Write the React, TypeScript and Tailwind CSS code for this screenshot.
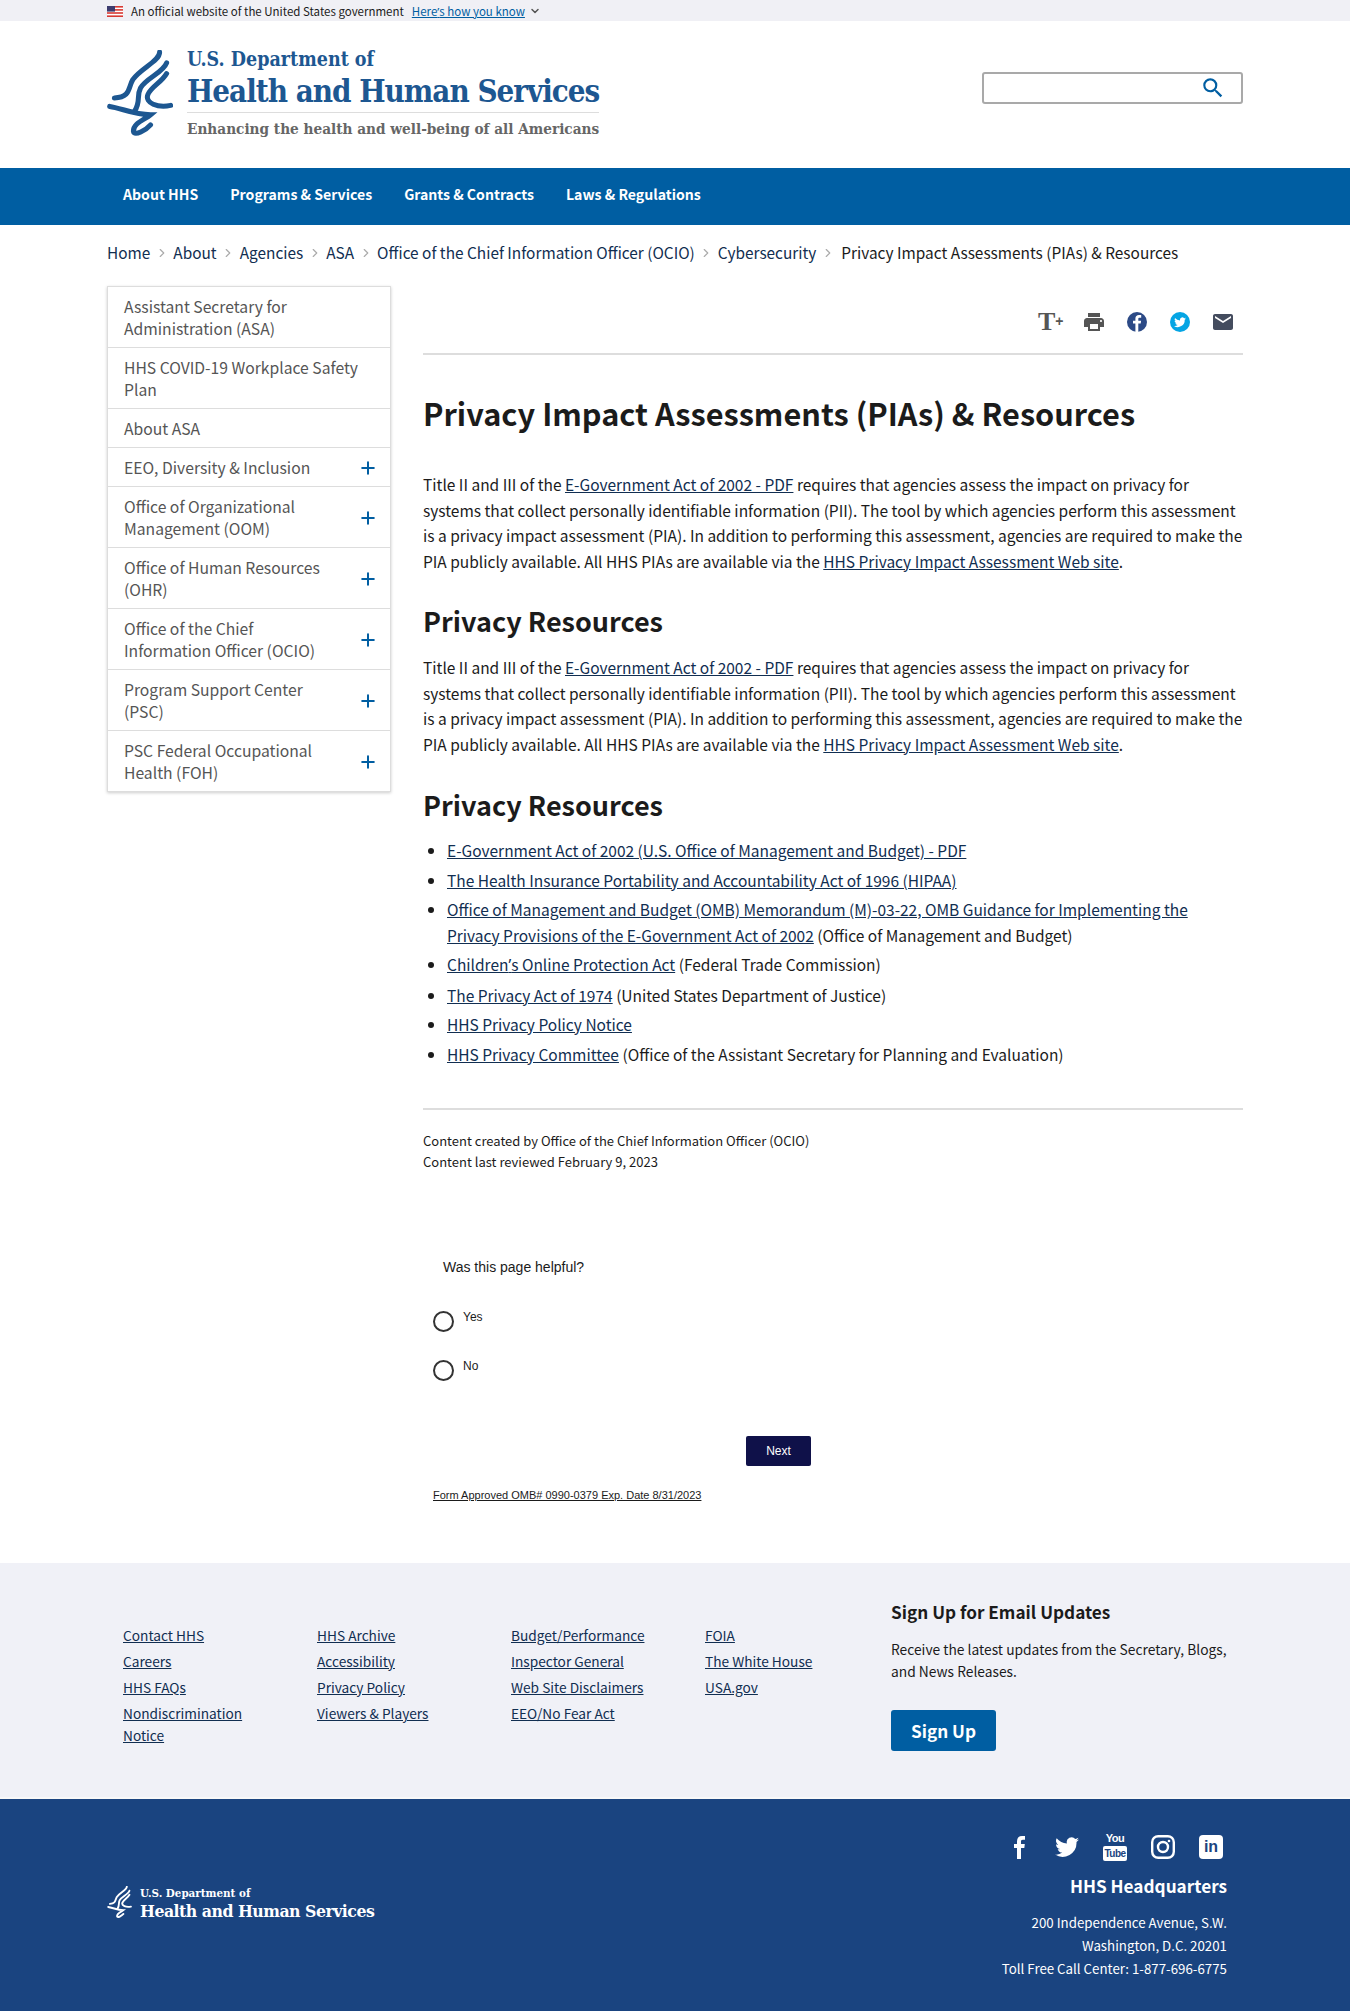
import { ChevronDown, ChevronRight, Plus } from 'lucide-react';
import type { ReactNode } from 'react';

const sans = "font-['Noto_Sans_CJK_SC','Source_Sans_Pro','Open_Sans',sans-serif]";
const serif = "font-['DejaVu_Serif_Condensed','DejaVu_Serif','Liberation_Serif',serif]";
const arial = "font-['Liberation_Sans',Arial,sans-serif]";

const crumbs = ['Home', 'About', 'Agencies', 'ASA', 'Office of the Chief Information Officer (OCIO)', 'Cybersecurity'];

const sideNav = [
  { label: 'Assistant Secretary for Administration (ASA)', plus: false },
  { label: 'HHS COVID-19 Workplace Safety Plan', plus: false },
  { label: 'About ASA', plus: false },
  { label: 'EEO, Diversity & Inclusion', plus: true },
  { label: 'Office of Organizational Management (OOM)', plus: true },
  { label: 'Office of Human Resources (OHR)', plus: true },
  { label: 'Office of the Chief Information Officer (OCIO)', plus: true },
  { label: 'Program Support Center (PSC)', plus: true },
  { label: 'PSC Federal Occupational Health (FOH)', plus: true },
];

const footerCols = [
  ['Contact HHS', 'Careers', 'HHS FAQs', 'Nondiscrimination Notice'],
  ['HHS Archive', 'Accessibility', 'Privacy Policy', 'Viewers & Players'],
  ['Budget/Performance', 'Inspector General', 'Web Site Disclaimers', 'EEO/No Fear Act'],
  ['FOIA', 'The White House', 'USA.gov'],
];

function A({ children }: { children: ReactNode }) {
  return <a className="text-[#112e51] underline">{children}</a>;
}

// curly quotes come out full width in the CJK face
function Apos() {
  return <span className="font-['Noto_Sans',sans-serif]">’</span>;
}

function Eagle({ className, color }: { className?: string; color: string }) {
  return (
    <svg className={className} viewBox="48 152 197 256" fill="none" stroke={color} strokeLinecap="round" strokeWidth="15">
      <path d="M205 158 C205 185 150 205 125 240 C110 265 120 292 70 295" />
      <path d="M226 190 C215 220 165 235 148 265 C135 290 150 305 130 335" />
      <path d="M226 222 C210 250 180 260 170 285 C160 310 200 325 238 317" />
      <path d="M56 320 C90 325 130 345 178 345 C160 360 125 370 127 395 C130 410 165 390 178 375" />
    </svg>
  );
}

function Flag() {
  return (
    <svg width="16" height="11" viewBox="0 0 16 11">
      <rect width="16" height="11" fill="#fff" />
      <rect width="16" height="1.6" fill="#d83933" />
      <rect y="3.1" width="16" height="1.6" fill="#d83933" />
      <rect y="6.2" width="16" height="1.6" fill="#d83933" />
      <rect y="9.4" width="16" height="1.6" fill="#d83933" />
      <rect width="8" height="5.6" fill="#3c3b6e" />
    </svg>
  );
}

function Intro() {
  return (
    <p>
      Title II and III of the <A>E-Government Act of 2002 - PDF</A> requires that agencies assess the impact on privacy for systems that collect personally identifiable information (PII). The tool by which agencies perform this assessment is a privacy impact assessment (PIA). In addition to performing this assessment, agencies are required to make the PIA publicly available. All HHS PIAs are available via the <A>HHS Privacy Impact Assessment Web site</A>.
    </p>
  );
}

export default function App() {
  return (
    <div className={`${sans} bg-white text-[15.5px] leading-[25.5px] text-[#1b1b1b]`}>
      <div className="h-[21px] bg-[#f0f0f5]">
        <div className="mx-[107px] flex h-full items-center pt-[1px] text-[11.5px] leading-[20px]">
          <Flag />
          <span className="ml-2">An official website of the United States government</span>
          <a className="ml-2 text-[#005ea2] underline">Here<Apos />s how you know</a>
          <ChevronDown className="ml-1 h-3 w-3 text-[#555]" strokeWidth={3} />
        </div>
      </div>

      <header className="flex h-[147px] items-start justify-between px-[107px]">
        <div className="mt-[29px] flex">
          <Eagle className="h-[86px] w-[66px]" color="#1d5791" />
          <div className="ml-[14px] mt-[-2px] w-[412px]">
            <div className={`${serif} text-[19.5px] font-bold leading-[24px] text-[#1d5791]`}>U.S. Department of</div>
            <div className={`${serif} whitespace-nowrap text-[31px] font-bold leading-[38px] tracking-[-1px] text-[#1d5791]`}>
              Health and Human Services
            </div>
            <div className="mt-[2px] h-px bg-[#ddd]" />
            <div className={`${serif} mt-[4px] whitespace-nowrap text-[15.2px] font-bold leading-[24px] text-[#666]`}>
              Enhancing the health and well-being of all Americans
            </div>
          </div>
        </div>
        <div className="mt-[51px] flex h-[32px] w-[261px] items-center justify-end rounded-[3px] border-2 border-[#a9a9a9] pr-[15px]">
          <svg width="26" height="26" viewBox="0 0 24 24" fill="#005ea2">
            <path d="M15.5 14h-.79l-.28-.27A6.471 6.471 0 0 0 16 9.5 6.5 6.5 0 1 0 9.5 16c1.61 0 3.09-.59 4.23-1.57l.27.28v.79l5 4.99L20.49 19l-4.99-5zm-6 0C7.01 14 5 11.99 5 9.5S7.01 5 9.5 5 14 7.01 14 9.5 11.99 14 9.5 14z" />
          </svg>
        </div>
      </header>

      <nav className="flex h-[57px] items-center bg-[#005ea2] pb-[3px] pl-[107px] text-[14.1px] font-bold text-white">
        <a className="px-4">About HHS</a>
        <a className="px-4">Programs &amp; Services</a>
        <a className="px-4">Grants &amp; Contracts</a>
        <a className="px-4">Laws &amp; Regulations</a>
      </nav>

      <div className="mx-[107px] mt-[15px] flex h-[25px] items-center text-[15.4px]">
        {crumbs.map((c) => (
          <span key={c} className="flex items-center">
            <a className="text-[#112e51]">{c}</a>
            <ChevronRight className="mx-[4.5px] h-[14px] w-[14px] text-[#aaa]" />
          </span>
        ))}
        <span className="ml-[2px]">Privacy Impact Assessments (PIAs) &amp; Resources</span>
      </div>

      <div className="mt-[21px] flex px-[107px]">
        <aside className="w-[284px] shrink-0 self-start border border-[#ddd] shadow-[0_1px_3px_rgba(0,0,0,0.2)]">
          {sideNav.map((item) => (
            <div key={item.label} className="flex items-center justify-between border-b border-[#ddd] pb-[7px] pl-[16px] pr-[12px] pt-[9px] text-[15.7px] leading-[22px] text-[#555] last:border-b-0">
              <span className={item.plus ? 'w-[215px]' : 'w-[250px]'}>{item.label}</span>
              {item.plus && <Plus className="h-[20px] w-[20px] text-[#005ea2]" strokeWidth={2.4} />}
            </div>
          ))}
        </aside>

        <main className="ml-[32px] flex-1">
          <div className="flex h-[69px] items-center justify-end gap-[19px] border-b-2 border-[#ddd] pr-[8px] pt-[5px]">
            <span className="flex w-[25px] items-start font-['Liberation_Serif',serif] text-[26px] font-bold leading-none text-[#555]">T<span className="mt-[5px] font-['Liberation_Sans',sans-serif] text-[14px]">+</span></span>
            <svg width="24" height="24" viewBox="0 0 24 24" fill="#555"><path d="M19 8H5c-1.66 0-3 1.34-3 3v6h4v4h12v-4h4v-6c0-1.66-1.34-3-3-3zm-3 11H8v-5h8v5zm3-7c-.55 0-1-.45-1-1s.45-1 1-1 1 .45 1 1-.45 1-1 1zm-1-9H6v4h12V3z" /></svg>
            <svg width="24" height="24" viewBox="0 0 24 24"><circle cx="12" cy="12" r="10" fill="#2c4a86" /><path d="M13.3 22v-8.500h2.400l.4-2.800h-2.800V9c0-.8.3-1.300 1.400-1.300h1.500V5.100c-.3 0-1.200-.1-2.200-.1-2.200 0-3.600 1.300-3.600 3.600v2.100H8v2.800h2.400V22z" fill="#fff" /></svg>
            <svg width="24" height="24" viewBox="0 0 24 24"><circle cx="12" cy="12" r="10" fill="#05a5e4" /><path d="M18 8.500c-.5.200-.9.300-1.400.4.500-.3.900-.8 1.100-1.300-.5.300-1 .5-1.600.6a2.400 2.400 0 0 0-4.100 2.200 6.900 6.900 0 0 1-5-2.500 2.400 2.400 0 0 0 .7 3.200c-.4 0-.8-.1-1.100-.3 0 1.200.8 2.200 1.900 2.400-.4.100-.7.100-1.100 0 .3 1 1.200 1.600 2.300 1.700A4.900 4.900 0 0 1 6 15.900a6.900 6.900 0 0 0 10.700-6.200c.5-.3.900-.7 1.300-1.200z" fill="#fff" /></svg>
            <svg width="24" height="24" viewBox="0 0 24 24" fill="#444c5e"><path d="M20 4H4c-1.100 0-1.990.9-1.990 2L2 18c0 1.100.9 2 2 2h16c1.100 0 2-.9 2-2V6c0-1.100-.9-2-2-2zm0 4l-8 5-8-5V6l8 5 8-5v2z" /></svg>
          </div>

          <h1 className="mt-[38px] text-[30.7px] font-bold leading-[40px]">Privacy Impact Assessments (PIAs) &amp; Resources</h1>

          <div className="mt-[39px]"><Intro /></div>
          <h2 className="mt-[28px] text-[27px] font-bold leading-[38px]">Privacy Resources</h2>
          <div className="mt-[15px]"><Intro /></div>
          <h2 className="mt-[29px] text-[27px] font-bold leading-[38px]">Privacy Resources</h2>
          <ul className="mt-[14px] list-disc space-y-[4px] pl-[24px]">
            <li><A>E-Government Act of 2002 (U.S. Office of Management and Budget) - PDF</A></li>
            <li><A>The Health Insurance Portability and Accountability Act of 1996 (HIPAA)</A></li>
            <li><A>Office of Management and Budget (OMB) Memorandum (M)-03-22, OMB Guidance for Implementing the Privacy Provisions of the E-Government Act of 2002</A> (Office of Management and Budget)</li>
            <li><A>Children<Apos />s Online Protection Act</A> (Federal Trade Commission)</li>
            <li><A>The Privacy Act of 1974</A> (United States Department of Justice)</li>
            <li><A>HHS Privacy Policy Notice</A></li>
            <li><A>HHS Privacy Committee</A> (Office of the Assistant Secretary for Planning and Evaluation)</li>
          </ul>

          <div className="mt-[41px] border-t-2 border-[#ddd] pt-[20px] text-[13px] leading-[21px]">
            <div>Content created by Office of the Chief Information Officer (OCIO)</div>
            <div>Content last reviewed February 9, 2023</div>
          </div>

          <section className={`${arial} mt-[86px] w-[388px] text-[14px] leading-[18px]`}>
            <div className="ml-[20px]">Was this page helpful?</div>
            <div className="mt-[32px] flex items-start">
              <span className="ml-[10px] mt-[3px] h-[21px] w-[21px] rounded-full border-2 border-[#333]" />
              <span className="ml-[9px] mt-[1px] text-[12px] leading-[16px]">Yes</span>
            </div>
            <div className="mt-[25px] flex items-start">
              <span className="ml-[10px] mt-[3px] h-[21px] w-[21px] rounded-full border-2 border-[#333]" />
              <span className="ml-[9px] mt-[1px] text-[12px] leading-[16px]">No</span>
            </div>
            <div className="mt-[55px] flex justify-end">
              <button className="h-[30px] w-[65px] rounded-[2px] bg-[#0f1149] text-[12px] text-white">Next</button>
            </div>
            <a className="ml-[10px] mt-[21px] block whitespace-nowrap text-[11px] leading-[16px] underline">Form Approved OMB# 0990-0379 Exp. Date 8/31/2023</a>
          </section>
        </main>
      </div>

      <footer className="mt-[60px] flex h-[236px] border-b-2 border-[#f8f8f8] bg-[#f0f1f7] pl-[123px] pr-[107px]">
        <div className="mt-[61px] flex">
          {footerCols.map((col, i) => (
            <ul key={i} className="w-[194px] space-y-[4px] text-[13.7px] leading-[22px] text-[#112e51]">
              {col.map((l) => (
                <li key={l} className="w-[150px] underline">{l}</li>
              ))}
            </ul>
          ))}
        </div>
        <div className="ml-[-8px] mt-[36px] w-[352px]">
          <div className="text-[17.2px] font-bold leading-[26px]">Sign Up for Email Updates</div>
          <p className="mt-[13px] w-[345px] text-[13.8px] leading-[22px]">Receive the latest updates from the Secretary, Blogs, and News Releases.</p>
          <button className="mt-[28px] h-[41px] w-[105px] rounded-[3px] bg-[#005ea2] text-[17.2px] font-bold text-white">Sign Up</button>
        </div>
      </footer>

      <div className="flex h-[212px] justify-between bg-[#1a4480] pl-[107px] pr-[123px] text-white">
        <div className="mt-[87px] flex h-[36px]">
          <Eagle className="h-[32px] w-[25px]" color="#fff" />
          <div className={`${serif} ml-[8px] font-bold`}>
            <div className="text-[11.5px] leading-[14px]">U.S. Department of</div>
            <div className="mt-[1px] whitespace-nowrap text-[17.5px] leading-[21px] tracking-[-0.5px]">Health and Human Services</div>
          </div>
        </div>
        <div className="flex flex-col items-end">
          <div className="mt-[33px] flex items-center gap-[24px] pr-[4px]">
            <svg width="24" height="26" viewBox="0 0 24 24" fill="#fff"><path d="M14 24V13h3.300l.5-4H14V6.600c0-1.200.3-1.900 1.900-1.900H18V1.100C17.600 1 16.400 1 15 1c-3 0-5 1.800-5 5.200V9H7v4h3v11z" /></svg>
            <svg width="24" height="24" viewBox="0 0 24 24" fill="#fff"><path d="M24 4.600c-.9.400-1.800.7-2.800.8 1-.6 1.800-1.600 2.200-2.700-1 .6-2 1-3.100 1.200A4.900 4.900 0 0 0 11.900 8.400 14 14 0 0 1 1.700 3.200a4.900 4.900 0 0 0 1.500 6.600c-.8 0-1.600-.2-2.200-.6 0 2.400 1.700 4.400 3.900 4.900-.7.200-1.500.2-2.200.1.600 2 2.400 3.400 4.600 3.400A9.900 9.900 0 0 1 0 19.600 14 14 0 0 0 21.500 7.100c1-.7 1.800-1.600 2.500-2.500z" /></svg>
            <span className="flex h-[29px] w-[24px] flex-col items-center justify-between font-['Liberation_Sans',sans-serif] font-bold leading-none">
              <span className="text-[11px] leading-[13px] tracking-[-0.5px]">You</span>
              <span className="rounded-[2px] bg-white px-[1px] text-[10px] leading-[15px] tracking-[-0.5px] text-[#1a4480]">Tube</span>
            </span>
            <svg width="24" height="24" viewBox="0 0 24 24" fill="none" stroke="#fff" strokeWidth="2.4"><rect x="1.200" y="1.200" width="21.600" height="21.600" rx="6" /><circle cx="12" cy="12" r="5" /><circle cx="18" cy="6" r="1.300" fill="#fff" stroke="none" /></svg>
            <span className="flex h-[24px] w-[24px] items-center justify-center rounded-[4px] bg-white font-['Liberation_Sans',sans-serif] text-[16px] font-bold text-[#1a4480]">in</span>
          </div>
          <div className="mt-[12px] text-[17.2px] font-bold leading-[26px]">HHS Headquarters</div>
          <div className="mt-[12px] text-right text-[13.3px] leading-[23px]">
            <div>200 Independence Avenue, S.W.</div>
            <div>Washington, D.C. 20201</div>
            <div>Toll Free Call Center: 1-877-696-6775</div>
          </div>
        </div>
      </div>
    </div>
  );
}
